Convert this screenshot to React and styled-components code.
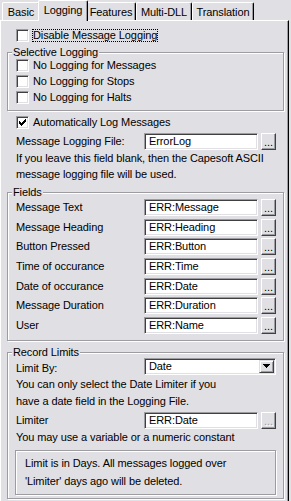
import React from "react";
import styled, { createGlobalStyle } from "styled-components";

const FACE = "#E0DFE3";
const SHADOW = "#9D9DA1";
const DARK = "#000000";
const DARK2 = "#404040";
const LIGHT = "#FFFFFF";

const GlobalStyle = createGlobalStyle`
  html, body { margin: 0; padding: 0; background: ${FACE}; }
  body { font-family: "Liberation Sans", Arial, sans-serif; font-size: 11px; color: #000; }
  *, *::before, *::after { box-sizing: border-box; }
`;

const Window = styled.div`
  width: 291px;
  height: 501px;
  overflow: hidden;
  background: ${FACE};
  display: flex;
  flex-direction: column;
  font-family: "Liberation Sans", Arial, sans-serif;
  font-size: 11px;
  letter-spacing: -0.1px;
  color: #000;
`;

const TabStrip = styled.div`
  flex: none;
  display: flex;
  align-items: flex-end;
  height: 20px;
  padding-left: 2px;
  position: relative;
  z-index: 2;
`;

const Tab = styled.div`
  flex: none;
  width: ${(p) => p.$w}px;
  height: ${(p) => (p.$active ? 21 : 18)}px;
  margin: 0 ${(p) => (p.$active ? -2 : 0)}px ${(p) => (p.$active ? -1 : 0)}px;
  position: relative;
  z-index: ${(p) => (p.$active ? 1 : 0)};
  background: ${FACE};
  border-left: 1px solid ${LIGHT};
  border-top: 1px solid ${LIGHT};
  border-right: 1px solid ${DARK};
  border-top-left-radius: 2px;
  border-top-right-radius: 2px;
  box-shadow: inset -1px 0 ${SHADOW};
  padding-top: 3px;
  text-align: center;
  line-height: 13px;
  white-space: nowrap;
`;

const Panel = styled.div`
  flex: 1;
  width: 289px;
  border-top: 1px solid ${LIGHT};
  border-left: 1px solid ${LIGHT};
  border-right: 1px solid ${DARK};
  box-shadow: inset -1px 0 ${SHADOW};
  padding: 8px 4px 0 6px;
  display: flex;
  flex-direction: column;
  position: relative;
  z-index: 1;
`;

const CheckRow = styled.div`
  display: flex;
  align-items: center;
  gap: 4px;
  height: 13px;
  margin-left: ${(p) => p.$ml || 0}px;
  margin-top: ${(p) => p.$mt || 0}px;
`;

const Box = styled.span`
  flex: none;
  width: 13px;
  height: 13px;
  background: #fff;
  border: 1px solid;
  border-color: ${SHADOW} ${LIGHT} ${LIGHT} ${SHADOW};
  box-shadow: inset 1px 1px ${DARK2}, inset -1px -1px ${FACE};
  display: flex;
  align-items: center;
  justify-content: center;
`;

const CheckLabel = styled.span`
  line-height: 13px;
  white-space: nowrap;
  ${(p) =>
    p.$focus
      ? `margin-left: -1px; padding: 0 1px; outline: 1px dotted #000; outline-offset: -1px;`
      : ``}
`;

const Group = styled.section`
  position: relative;
  border: 1px solid ${SHADOW};
  box-shadow: inset 1px 1px ${LIGHT}, 1px 1px ${LIGHT};
  margin-top: ${(p) => p.$mt}px;
  padding: ${(p) => p.$pt}px 6px ${(p) => p.$pb}px 8px;
  display: flex;
  flex-direction: column;
  gap: ${(p) => p.$gap || 0}px;
`;

const GroupTitle = styled.span`
  position: absolute;
  top: -7px;
  left: 4px;
  padding: 0 1px;
  background: ${FACE};
  line-height: 13px;
  white-space: nowrap;
`;

const FieldRow = styled.div`
  display: grid;
  grid-template-columns: 125px 114px 15px;
  column-gap: 3px;
  align-items: center;
  height: 17px;
  margin-left: ${(p) => p.$ml || 0}px;
  margin-top: ${(p) => p.$mt || 0}px;
`;

const Label = styled.span`
  line-height: 13px;
  white-space: nowrap;
`;

const LowLabel = styled(Label)`
  align-self: end;
`;

const TextBox = styled.div`
  height: 17px;
  background: #fff;
  border: 1px solid;
  border-color: ${SHADOW} ${LIGHT} ${LIGHT} ${SHADOW};
  box-shadow: inset 1px 1px ${DARK2}, inset -1px -1px ${FACE};
  padding: 0 4px;
  line-height: 15px;
  white-space: nowrap;
  overflow: hidden;
`;

const Browse = styled.button`
  width: 15px;
  height: 17px;
  margin: 0;
  padding: 2px 0 0;
  background: ${FACE};
  border: 1px solid;
  border-color: ${LIGHT} ${DARK2} ${DARK2} ${LIGHT};
  box-shadow: inset -1px -1px ${SHADOW};
  display: flex;
  align-items: flex-start;
  justify-content: center;
  font-family: "Liberation Sans", Arial, sans-serif;
  font-size: 11px;
  line-height: 13px;
  letter-spacing: 0;
  color: ${(p) => (p.disabled ? SHADOW : "#000")};
  text-shadow: ${(p) => (p.disabled ? `1px 1px ${LIGHT}` : "none")};
`;

const Select = styled.div`
  grid-column: 2 / span 2;
  height: 17px;
  background: #fff;
  border: 1px solid;
  border-color: ${SHADOW} ${LIGHT} ${LIGHT} ${SHADOW};
  box-shadow: inset 1px 1px ${DARK2}, inset -1px -1px ${FACE};
  padding: 1px 1px 1px 4px;
  display: flex;
  align-items: center;
  justify-content: space-between;
  line-height: 13px;
`;

const DropButton = styled.span`
  flex: none;
  width: 15px;
  height: 13px;
  background: ${FACE};
  border: 1px solid;
  border-color: ${FACE} ${DARK2} ${DARK2} ${FACE};
  box-shadow: inset 1px 1px ${LIGHT}, inset -1px -1px ${SHADOW};
  display: flex;
  align-items: center;
  justify-content: center;
`;

const Note = styled.p`
  margin: ${(p) => p.$mt || 0}px 0 0 ${(p) => p.$ml || 0}px;
  line-height: ${(p) => p.$lh || 16}px;
  white-space: nowrap;
`;

const InfoBox = styled.div`
  margin: 5px 0 0 -1px;
  width: 261px;
  border: 1px solid ${SHADOW};
  box-shadow: inset 1px 1px ${LIGHT}, 1px 1px ${LIGHT};
  padding: 3px 0 4px 9px;
  line-height: 18px;
  white-space: nowrap;
`;

const CheckMark = () => (
  <svg width="7" height="7" viewBox="0 0 7 7" shapeRendering="crispEdges">
    <path
      fill="#000"
      d="M0 2h1v3h-1z M1 3h1v3h-1z M2 4h1v3h-1z M3 3h1v3h-1z M4 2h1v3h-1z M5 1h1v3h-1z M6 0h1v3h-1z"
    />
  </svg>
);

const Arrow = () => (
  <svg width="7" height="4" viewBox="0 0 7 4" shapeRendering="crispEdges">
    <path fill="#000" d="M0 0h7v1h-7z M1 1h5v1h-5z M2 2h3v1h-3z M3 3h1v1h-1z" />
  </svg>
);

const Check = ({ label, checked, focus, ml, mt }) => (
  <CheckRow $ml={ml} $mt={mt}>
    <Box>{checked && <CheckMark />}</Box>
    <CheckLabel $focus={focus}>{label}</CheckLabel>
  </CheckRow>
);

const Field = ({ label, value, ml, mt, disabled }) => (
  <FieldRow $ml={ml} $mt={mt}>
    <Label>{label}</Label>
    <TextBox>{value}</TextBox>
    <Browse disabled={disabled}>...</Browse>
  </FieldRow>
);

const tabs = [
  { label: "Basic", w: 38 },
  { label: "Logging", w: 50, active: true },
  { label: "Features", w: 50 },
  { label: "Multi-DLL", w: 56 },
  { label: "Translation", w: 62 },
];

const fields = [
  ["Message Text", "ERR:Message"],
  ["Message Heading", "ERR:Heading"],
  ["Button Pressed", "ERR:Button"],
  ["Time of occurance", "ERR:Time"],
  ["Date of occurance", "ERR:Date"],
  ["Message Duration", "ERR:Duration"],
  ["User", "ERR:Name"],
];

export default function App() {
  return (
    <>
      <GlobalStyle />
      <Window>
        <TabStrip>
          {tabs.map((t) => (
            <Tab key={t.label} $w={t.w} $active={t.active}>
              {t.label}
            </Tab>
          ))}
        </TabStrip>
        <Panel>
          <Check label="Disable Message Logging" focus ml={9} />
          <Group $mt={10} $pt={6} $pb={6} $gap={3}>
            <GroupTitle>Selective Logging</GroupTitle>
            <Check label="No Logging for Messages" />
            <Check label="No Logging for Stops" />
            <Check label="No Logging for Halts" />
          </Group>
          <Check label="Automatically Log Messages" checked ml={9} mt={5} />
          <Field label="Message Logging File:" value="ErrorLog" ml={9} mt={4} />
          <Note $ml={9}>
            If you leave this field blank, then the Capesoft ASCII
            <br />
            message logging file will be used.
          </Note>
          <Group $mt={10} $pt={6} $pb={6} $gap={2.67}>
            <GroupTitle>Fields</GroupTitle>
            {fields.map(([l, v]) => (
              <Field key={l} label={l} value={v} />
            ))}
          </Group>
          <Group $mt={11} $pt={5} $pb={3}>
            <GroupTitle>Record Limits</GroupTitle>
            <FieldRow>
              <LowLabel>Limit By:</LowLabel>
              <Select>
                <span>Date</span>
                <DropButton>
                  <Arrow />
                </DropButton>
              </Select>
            </FieldRow>
            <Note $mt={1} $lh={17}>
              You can only select the Date Limiter if you
              <br />
              have a date field in the Logging File.
            </Note>
            <Field label="Limiter" value="ERR:Date" mt={2} disabled />
            <Note>You may use a variable or a numeric constant</Note>
            <InfoBox>
              Limit is in Days. All messages logged over
              <br />
              'Limiter' days ago will be deleted.
            </InfoBox>
          </Group>
        </Panel>
      </Window>
    </>
  );
}
